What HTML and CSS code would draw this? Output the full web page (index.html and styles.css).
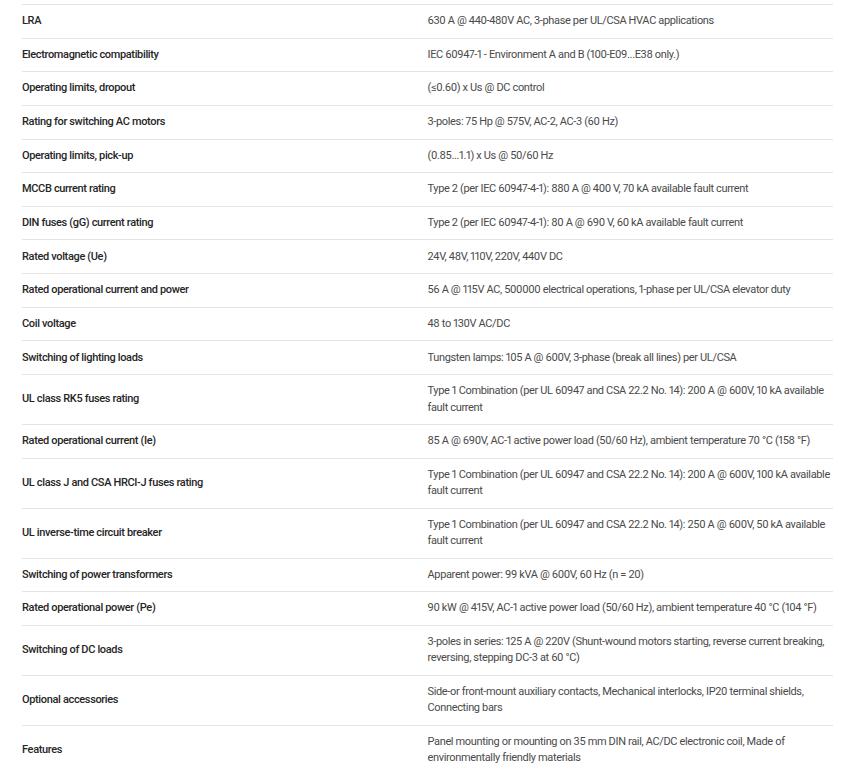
FILE: index.html
```html
<!DOCTYPE html>
<html lang="en">
<head>
  <meta charset="UTF-8" />
  <meta name="viewport" content="width=device-width, initial-scale=1.0"/>
  <title>Technical data</title>
  <link rel="stylesheet" href="styles.css">
</head>
<body>
  <div class="specs">
    <table class="spec-table">
      <tbody>
        <tr><td class="label">LRA</td><td class="value">630 A @ 440-480V AC, 3-phase per UL/CSA HVAC applications</td></tr>
        <tr><td class="label">Electromagnetic compatibility</td><td class="value">IEC 60947-1 - Environment A and B (100-E09...E38 only.)</td></tr>
        <tr><td class="label">Operating limits, dropout</td><td class="value">(≤0.60) x Us @ DC control</td></tr>
        <tr><td class="label">Rating for switching AC motors</td><td class="value">3-poles: 75 Hp @ 575V, AC-2, AC-3 (60 Hz)</td></tr>
        <tr><td class="label">Operating limits, pick-up</td><td class="value">(0.85...1.1) x Us @ 50/60 Hz</td></tr>
        <tr><td class="label">MCCB current rating</td><td class="value">Type 2 (per IEC 60947-4-1): 880 A @ 400 V, 70 kA available fault current</td></tr>
        <tr><td class="label">DIN fuses (gG) current rating</td><td class="value">Type 2 (per IEC 60947-4-1): 80 A @ 690 V, 60 kA available fault current</td></tr>
        <tr><td class="label">Rated voltage (Ue)</td><td class="value">24V, 48V, 110V, 220V, 440V DC</td></tr>
        <tr><td class="label">Rated operational current and power</td><td class="value">56 A @ 115V AC, 500000 electrical operations, 1-phase per UL/CSA elevator duty</td></tr>
        <tr><td class="label">Coil voltage</td><td class="value">48 to 130V AC/DC</td></tr>
        <tr><td class="label">Switching of lighting loads</td><td class="value">Tungsten lamps: 105 A @ 600V, 3-phase (break all lines) per UL/CSA</td></tr>
        <tr><td class="label">UL class RK5 fuses rating</td><td class="value">Type 1 Combination (per UL 60947 and CSA 22.2 No. 14): 200 A @ 600V, 10 kA available fault current</td></tr>
        <tr><td class="label">Rated operational current (Ie)</td><td class="value">85 A @ 690V, AC-1 active power load (50/60 Hz), ambient temperature 70 °C (158 °F)</td></tr>
        <tr><td class="label">UL class J and CSA HRCI-J fuses rating</td><td class="value">Type 1 Combination (per UL 60947 and CSA 22.2 No. 14): 200 A @ 600V, 100 kA available fault current</td></tr>
        <tr><td class="label">UL inverse-time circuit breaker</td><td class="value">Type 1 Combination (per UL 60947 and CSA 22.2 No. 14): 250 A @ 600V, 50 kA available fault current</td></tr>
        <tr><td class="label">Switching of power transformers</td><td class="value">Apparent power: 99 kVA @ 600V, 60 Hz (n = 20)</td></tr>
        <tr><td class="label">Rated operational power (Pe)</td><td class="value">90 kW @ 415V, AC-1 active power load (50/60 Hz), ambient temperature 40 °C (104 °F)</td></tr>
        <tr><td class="label">Switching of DC loads</td><td class="value">3-poles in series: 125 A @ 220V (Shunt-wound motors starting, reverse current breaking, reversing, stepping DC-3 at 60 °C)</td></tr>
        <tr><td class="label">Optional accessories</td><td class="value">Side-or front-mount auxiliary contacts, Mechanical interlocks, IP20 terminal shields, Connecting bars</td></tr>
        <tr><td class="label">Features</td><td class="value">Panel mounting or mounting on 35 mm DIN rail, AC/DC electronic coil, Made of environmentally friendly materials</td></tr>
      </tbody>
    </table>
  </div>
</body>
</html>
```

FILE: styles.css
```css
body {
  margin: 0;
  background: #fff;
  font-family: Roboto, "Liberation Sans", sans-serif;
  font-size: 11px;
  letter-spacing: -0.35px;
  font-variant-numeric: proportional-nums;
}
.specs {
  padding: 4px 0 0 22px;
  width: 811px;
}
.spec-table {
  width: 100%;
  border-collapse: collapse;
  table-layout: fixed;
  border-top: 1px solid #e4e4e4;
}
.spec-table td {
  padding: 8.16px 0;
  line-height: 16.33px;
  vertical-align: middle;
  border-bottom: 1px solid #e4e4e4;
}
.label {
  width: 50%;
  color: #262626;
  font-weight: 500;
}
.value {
  padding-right: 7px;
  color: #4a4a4a;
}
```
